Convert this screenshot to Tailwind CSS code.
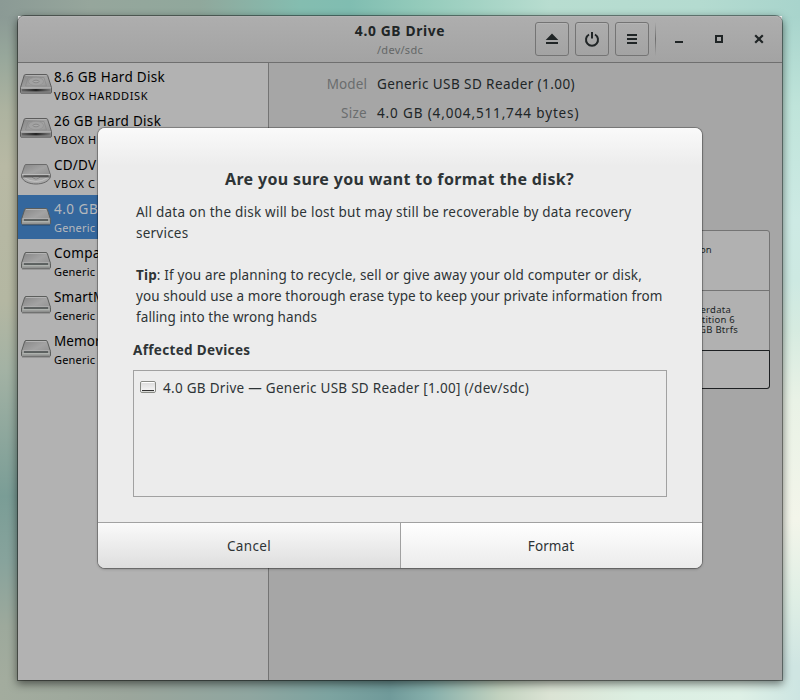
<!DOCTYPE html>
<html lang="en">
<head>
<meta charset="utf-8">
<title>Disks</title>
<script src="https://cdn.jsdelivr.net/npm/@tailwindcss/browser@4"></script>
</head>
<body class="w-[800px] h-[700px] overflow-hidden font-['Noto_Sans',sans-serif] text-[#2e3436]">
<svg class="absolute w-0 h-0">
  <defs>
    <linearGradient id="top" x1="0" y1="0" x2="1" y2="1"><stop offset="0" stop-color="#858585"/><stop offset=".5" stop-color="#a3a3a3"/><stop offset="1" stop-color="#8b8b8b"/></linearGradient>
    <linearGradient id="front" x1="0" y1="0" x2="1" y2="0"><stop offset="0" stop-color="#666"/><stop offset=".5" stop-color="#222"/><stop offset="1" stop-color="#777"/></linearGradient>
    <linearGradient id="small" x1="0" y1="0" x2="0" y2="1"><stop offset="0" stop-color="#dadada"/><stop offset="1" stop-color="#fafafa"/></linearGradient>
    <symbol id="hdd" viewBox="0 0 36 24">
      <path d="M3 20.500h30v1.500H3z" fill="#000" opacity=".18"/>
      <path d="M7.500 2.500h20.800q1 0 1.300.9l3.900 12.200v4.600q0 .8-.8.8H3.300q-.8 0-.8-.8v-4.600L6.200 3.400q.3-.9 1.300-.9z" fill="url(#top)" stroke="#5c5c5c"/>
      <path d="M7.600 3.500h20.600" stroke="#b0b0b0" fill="none"/>
      <path d="M10 5.500h16l2.500 8.500H7.500z" fill="none" stroke="#8a8a8a" stroke-width=".7"/>
      <ellipse cx="18" cy="9.500" rx="7.500" ry="4.200" fill="#a2a2a2" stroke="#8f8f8f" stroke-width=".6"/>
      <ellipse cx="18" cy="9.500" rx="3" ry="1.300" fill="#aaa" stroke="#7c7c7c" stroke-width=".7"/>
      <path d="M3 15.800h30" stroke="#b4b4b4"/>
      <path d="M3.500 17h29v3h-29z" fill="url(#front)"/>
      <path d="M3.500 19.800h29" stroke="#8c8c8c" stroke-width=".8"/>
    </symbol>
    <symbol id="optical" viewBox="0 0 36 24">
      <path d="M3.500 14.500C6 24.500 30 24.500 32.500 14.500z" fill="#aaa" stroke="#666"/>
      <path d="M6 15.500q11.500 8 24 0" stroke="#c2c2c2" fill="none"/>
      <path d="M13.500 14.500q4.500 5 9 0z" fill="#c4c4c4" stroke="#777" stroke-width=".8"/>
      <path d="M8 2.500h20q1 0 1.300.9l3.200 9.600v2H3.500v-2L6.700 3.400q.3-.9 1.300-.9z" fill="url(#top)" stroke="#6b6b6b"/>
      <path d="M4 12.500h28" stroke="#bdbdbd"/>
      <path d="M5.500 14h25" stroke="#2a2a2a"/>
    </symbol>
    <symbol id="drive" viewBox="0 0 36 24">
      <path d="M4 18.500h28v1.500H4z" fill="#000" opacity=".15"/>
      <path d="M8 2.500h20q1 0 1.300.9l3.200 10v4q0 .8-.8.8H4.300q-.8 0-.8-.8v-4l3.200-10q.3-.9 1.300-.9z" fill="url(#top)" stroke="#5c5e5c"/>
      <path d="M8 3.500h20M4.500 12.800h27" stroke="#b4b4b4"/>
      <path d="M4 13.500h28v4H4z" fill="#9c9e9c"/>
      <path d="M6 14h24" stroke="#1c2424"/>
      <path d="M4.500 15.500h27" stroke="#aeb2ae"/>
    </symbol>
  </defs>
</svg>
<div class="w-[800px] h-[700px] flex flex-col">
  <div class="h-4 shrink-0 bg-[linear-gradient(90deg,#8b9a95_0px,#96a69c_90px,#90a89c_200px,#84bdb0_300px,#80bdb1_350px,#94cbbb_420px,#b8ddd0_550px,#b4dbd0_700px,#a8d4cc_800px)]"></div>
  <div class="h-[664px] flex">
    <div class="w-[18px] shrink-0 bg-[linear-gradient(180deg,#8b9a95_0px,#97a79b_40px,#adb3a0_95px,#b8b9a4_150px,#b4b7a2_285px,#a3b2a4_354px,#7a9d96_480px,#87a39c_544px,#9da99c_610px,#a3ac9e_664px)]"></div>

    <main class="relative z-10 w-[764px] h-[664px] flex flex-col rounded-t-[7px] bg-[#a6a6a6] shadow-[0_0_0_1px_rgba(0,0,0,.4),0_3px_9px_1px_rgba(0,0,0,.5)]">
      <header class="h-[47px] shrink-0 flex rounded-t-[7px] bg-linear-to-b from-[#aeaeae] to-[#a3a3a3] border-b border-[#6f6f6f] shadow-[inset_0_1px_0_#b4b4b4]">
        <div class="w-[267px]"></div>
        <div class="w-[230px] pt-[5px] text-center">
          <h1 class="text-[13.8px] leading-[20px] font-bold tracking-[.65px] text-[#202526]">4.0 GB Drive</h1>
          <p class="text-[11px] leading-[18px] tracking-[.27px] text-[#646767]">/dev/sdc</p>
        </div>
        <div class="ml-5 pt-[6px] flex gap-[6px]">
          <button class="size-[34px] flex items-center justify-center rounded-[3px] border border-[#747474] bg-linear-to-b from-[#adadad] to-[#a3a3a3] shadow-[inset_0_1px_0_#b5b5b5]">
            <svg class="size-4" viewBox="0 0 16 16" fill="#202526"><path d="M8 2.500L14.300 9H1.700zM2 11h12v2H2z"/></svg></button>
          <button class="size-[34px] flex items-center justify-center rounded-[3px] border border-[#747474] bg-linear-to-b from-[#adadad] to-[#a3a3a3] shadow-[inset_0_1px_0_#b5b5b5]">
            <svg class="size-4" viewBox="0 0 16 16" fill="none" stroke="#202526" stroke-width="2"><path d="M5 3.500A6 6 0 1 0 11 3.500M8 1v6.500"/></svg></button>
          <button class="size-[34px] flex items-center justify-center rounded-[3px] border border-[#747474] bg-linear-to-b from-[#adadad] to-[#a3a3a3] shadow-[inset_0_1px_0_#b5b5b5]">
            <svg class="size-4" viewBox="0 0 16 16" fill="#202526"><path d="M3 3h10v2H3zM3 7h10v2H3zM3 11h10v2H3z"/></svg></button>
        </div>
        <div class="ml-[6px] mt-[6px] w-px h-[34px] bg-linear-to-b from-transparent via-[#6c6c6c] to-transparent"></div>
        <div class="ml-[15px] pt-[15px] flex gap-6">
          <svg class="size-4" viewBox="0 0 16 16" fill="#202526"><path d="M4 10h8v2H4z"/></svg>
          <svg class="size-4" viewBox="0 0 16 16" fill="none" stroke="#202526" stroke-width="2"><path d="M5 5h6v6H5z"/></svg>
          <svg class="size-4" viewBox="0 0 16 16" fill="none" stroke="#202526" stroke-width="2.200"><path d="M4.200 4.200l7.600 7.600M11.800 4.200l-7.600 7.600"/></svg>
        </div>
      </header>

      <div class="flex flex-1 min-h-0">
        <nav class="w-[251px] shrink-0 bg-[#b2b2b2] border-r border-[#747474] text-black overflow-hidden whitespace-nowrap">
          <div class="h-11 flex"><svg class="w-9 h-6 mt-[9px]"><use href="#hdd"/></svg><div class="pt-1"><p class="text-[13.5px] leading-5 tracking-[.29px]">8.6 GB Hard Disk</p><p class="text-[11px] leading-[18px] tracking-[.62px]">VBOX HARDDISK</p></div></div>
          <div class="h-11 flex"><svg class="w-9 h-6 mt-[9px]"><use href="#hdd"/></svg><div class="pt-1"><p class="text-[13.5px] leading-5 tracking-[.29px]">26 GB Hard Disk</p><p class="text-[11px] leading-[18px] tracking-[.5px]">VBOX H</p></div></div>
          <div class="h-11 flex"><svg class="w-9 h-6 mt-[11px]"><use href="#optical"/></svg><div class="pt-1"><p class="text-[13.5px] leading-5 tracking-[.2px]">CD/DV</p><p class="text-[11px] leading-[18px] tracking-[.5px]">VBOX C</p></div></div>
          <div class="h-11 flex bg-[#34679d] text-[#b4b8bc]"><svg class="w-9 h-6 mt-[11px]"><use href="#drive"/></svg><div class="pt-1"><p class="text-[13.5px] leading-5 tracking-[.5px]">4.0 GB</p><p class="text-[11px] leading-[18px] tracking-[.2px]">Generic</p></div></div>
          <div class="h-11 flex"><svg class="w-9 h-6 mt-[11px]"><use href="#drive"/></svg><div class="pt-1"><p class="text-[13.5px] leading-5 tracking-[.29px]">Compa</p><p class="text-[11px] leading-[18px] tracking-[.2px]">Generic</p></div></div>
          <div class="h-11 flex"><svg class="w-9 h-6 mt-[11px]"><use href="#drive"/></svg><div class="pt-1"><p class="text-[13.5px] leading-5 tracking-[.2px]">SmartM</p><p class="text-[11px] leading-[18px] tracking-[.2px]">Generic</p></div></div>
          <div class="h-11 flex"><svg class="w-9 h-6 mt-[11px]"><use href="#drive"/></svg><div class="pt-1"><p class="text-[13.5px] leading-5 tracking-[.1px]">Memor</p><p class="text-[11px] leading-[18px] tracking-[.2px]">Generic</p></div></div>
        </nav>
        <section class="flex-1 flex flex-col">
          <dl class="pt-[7px] grid grid-cols-[98px_1fr] gap-x-[10px] text-[13.5px] leading-[29px] text-[#202526]">
            <dt class="text-right text-[#6a6d6e] tracking-[.1px]">Model</dt><dd class="tracking-[.42px]">Generic USB SD Reader (1.00)</dd>
            <dt class="text-right text-[#6a6d6e] tracking-[.3px]">Size</dt><dd class="tracking-[.86px]">4.0 GB (4,004,511,744 bytes)</dd>
          </dl>
          <div class="mt-[102px] ml-8 w-[469px] h-[159px] rounded-[3px] border border-[#747474] bg-[#b1b1b1] flex flex-col text-[9.5px] leading-[10px] tracking-[.25px] text-[#202526] text-right">
            <div class="h-[60px] pt-[14px] pr-[57px] border-b border-[#747474]">on</div>
            <div class="h-[59px] pt-[14px]">
              <p class="pr-[38px]">erdata</p><p class="pr-[34px]">tition 6</p><p class="pr-[31px]">GB Btrfs</p>
            </div>
            <div class="-mx-px -mb-px flex-1 border border-[#1d2022] rounded-b-[3px]"></div>
          </div>
        </section>
      </div>
    </main>

    <div class="w-[18px] shrink-0 bg-[linear-gradient(180deg,#a8d4cc_0px,#bfe4da_90px,#cdeae4_204px,#cde9e2_264px,#d6ebe0_314px,#e9f2e6_384px,#f3f5ea_504px,#e0efe5_580px,#cfe5e2_650px)]"></div>
  </div>
  <div class="h-5 shrink-0 bg-[linear-gradient(90deg,#a3ac9e_0px,#9ba69c_130px,#8fa6a0_250px,#7ca3a0_330px,#709a9a_390px,#86afab_430px,#c2d2bf_500px,#dbe3d4_550px,#dcefe2_640px,#def0e6_740px,#cde5e2_800px)]"></div>
</div>

<div class="absolute z-20 left-[98px] top-[128px] w-[604px] h-[440px] flex flex-col rounded-[7px] overflow-hidden bg-[#ececec] shadow-[0_0_0_1px_rgba(0,0,0,.25),0_1px_3px_rgba(0,0,0,.3)]">
  <div class="h-[394px] px-[35px] pt-[41px] bg-[linear-gradient(180deg,#fafafa_0px,#ececec_38px)] whitespace-nowrap">
    <h2 class="text-center text-[16px] leading-[21px] font-bold tracking-[.34px] -ml-px">Are you sure you want to format the disk?</h2>
    <div class="mt-3 pl-[3px] text-[13.5px] leading-[21px]">
      <p class="tracking-[.23px]">All data on the disk will be lost but may still be recoverable by data recovery</p>
      <p class="tracking-[.23px]">services</p>
      <p class="mt-[21px] tracking-[.15px]"><b>Tip</b>: If you are planning to recycle, sell or give away your old computer or disk,</p>
      <p class="tracking-[.07px]">you should use a more thorough erase type to keep your private information from</p>
      <p class="tracking-[.08px]">falling into the wrong hands</p>
    </div>
    <h3 class="mt-3 text-[13.5px] leading-[21px] font-bold tracking-[.34px]">Affected Devices</h3>
    <div class="mt-[9px] h-[127px] border border-[#a1a1a1] pl-[6px] pt-[7px]">
      <div class="h-5 flex items-center gap-[7px]">
        <svg class="w-4 h-4" viewBox="0 0 16 16"><rect x=".5" y="1.500" width="15" height="11" rx="1.500" fill="url(#small)" stroke="#888a85"/><path d="M1.500 2.500h13" stroke="#fff"/><path d="M2 10.500h12" stroke="#333"/><path d="M2 11.500h12" stroke="#d8d9d6"/></svg>
        <span class="text-[13.5px] leading-5 tracking-[.28px]">4.0 GB Drive — Generic USB SD Reader [1.00] (/dev/sdc)</span>
      </div>
    </div>
  </div>
  <div class="h-[46px] flex border-t border-[#a1a1a1] text-[13.5px] text-shadow-[0_1px_0_#fff]">
    <button class="w-[303px] pt-[2px] border-r border-[#a1a1a1] bg-linear-to-b from-[#fafafa] to-[#dedede] tracking-[.33px]">Cancel</button>
    <button class="flex-1 pt-[2px] pr-px bg-linear-to-b from-white to-[#ebebeb] tracking-[.1px]">Format</button>
  </div>
</div>
</body>
</html>
